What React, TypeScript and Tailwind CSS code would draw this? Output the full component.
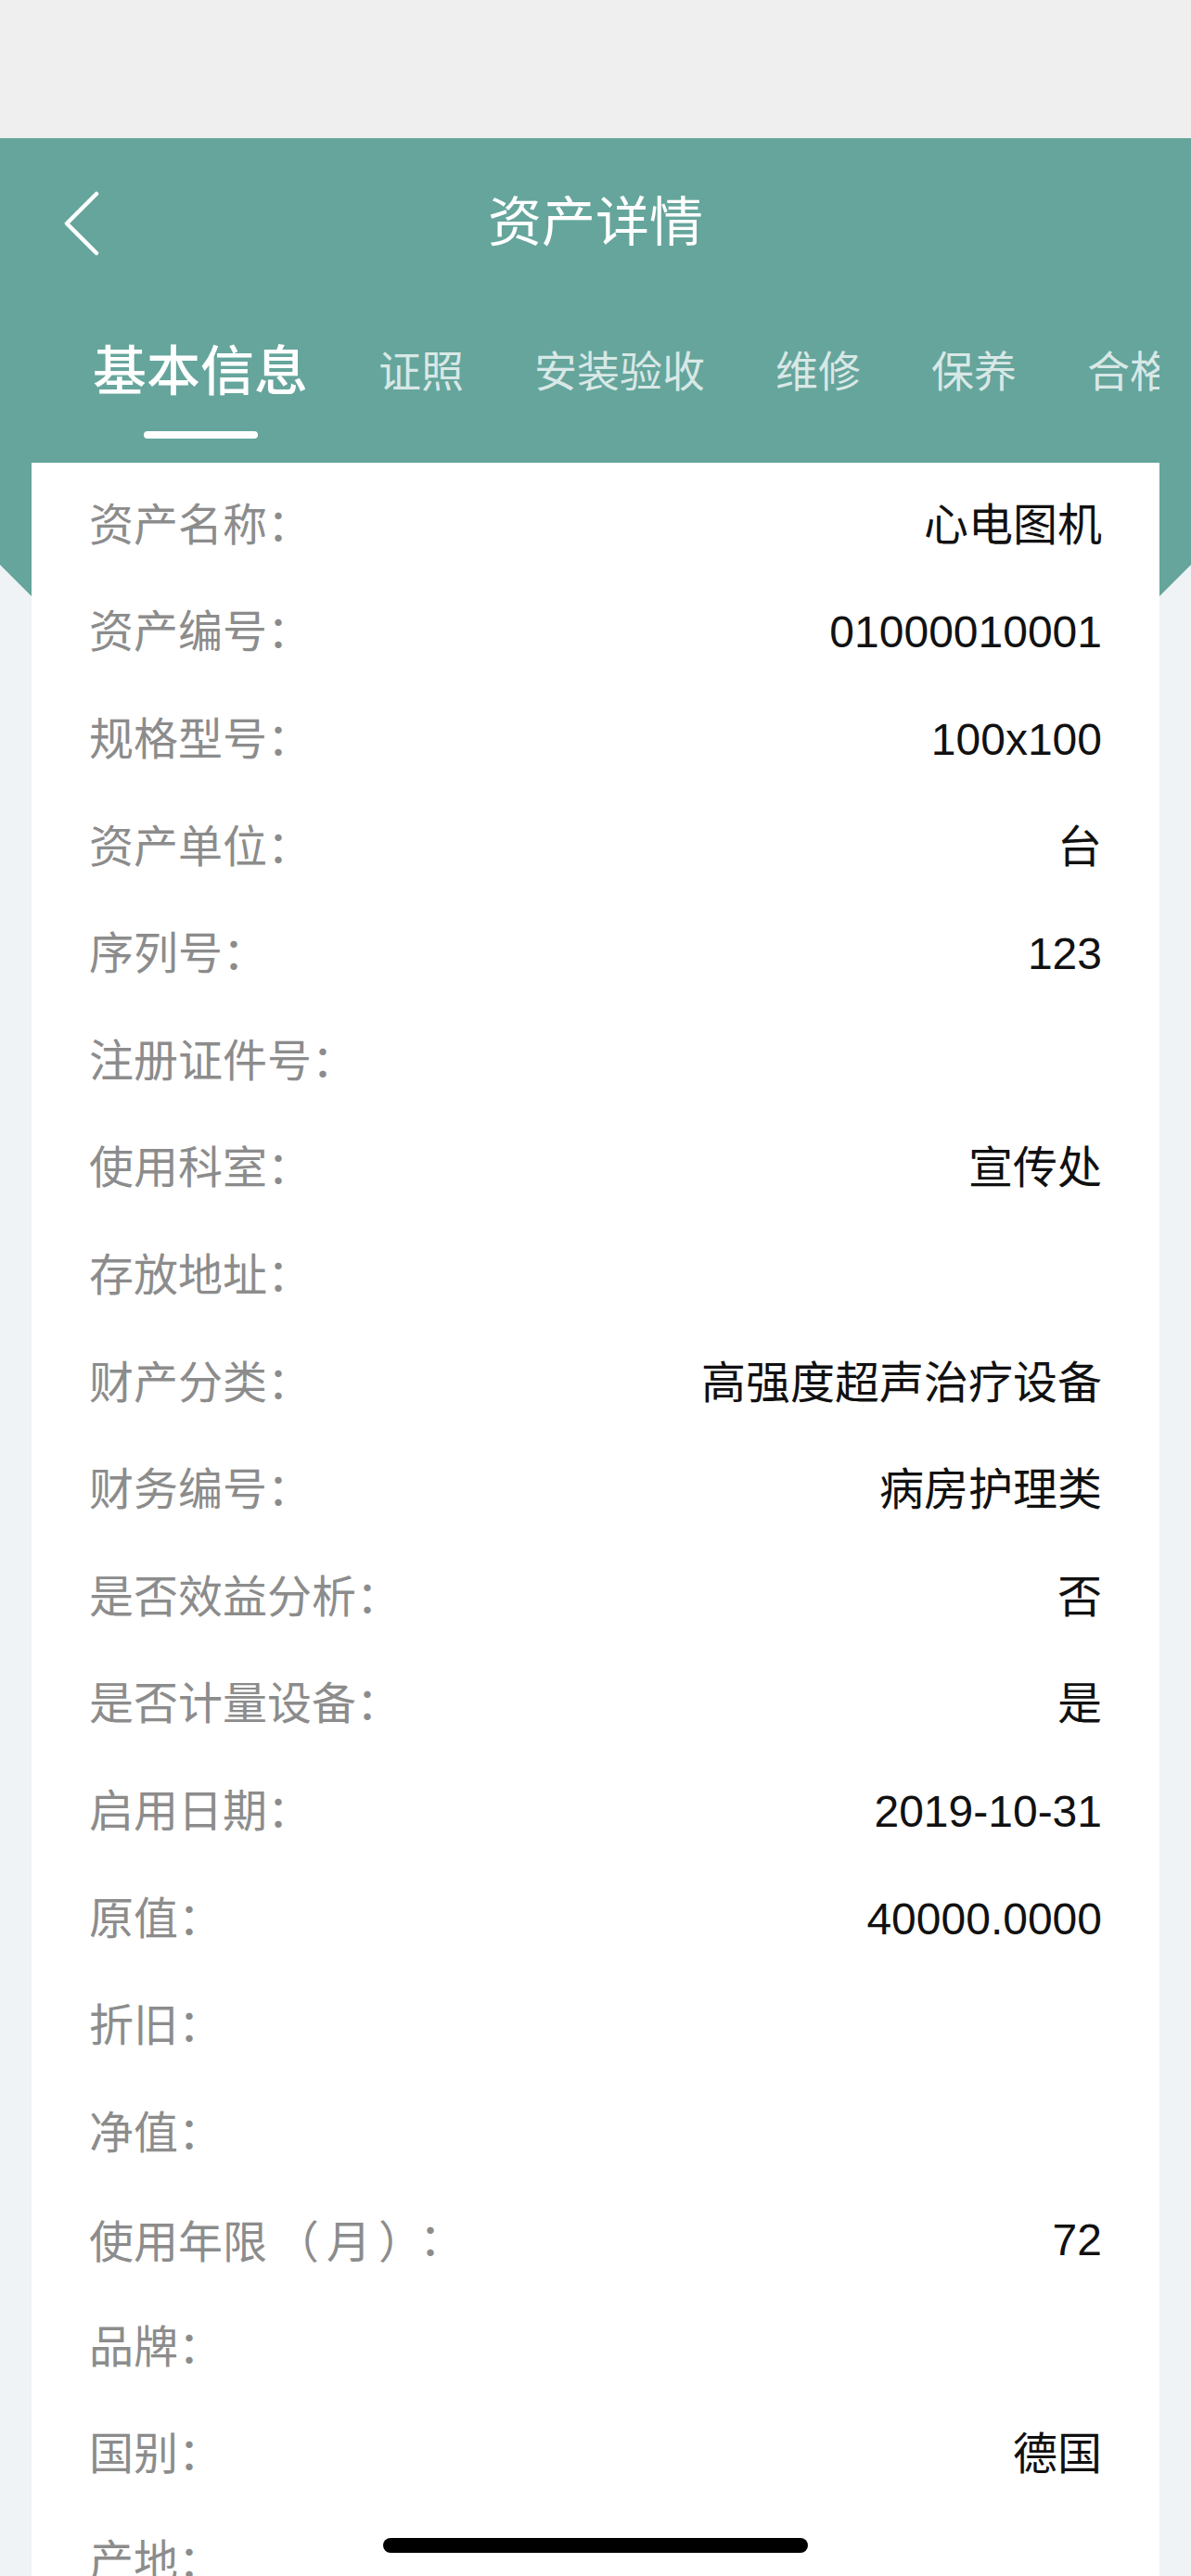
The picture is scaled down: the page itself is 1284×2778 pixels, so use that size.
import React from 'react';

type Row = { label: string; suffix?: string; value: string };

const ROWS: Row[] = [
  { label: '资产名称：', value: '心电图机' },
  { label: '资产编号：', value: '01000010001' },
  { label: '规格型号：', value: '100x100' },
  { label: '资产单位：', value: '台' },
  { label: '序列号：', value: '123' },
  { label: '注册证件号：', value: '' },
  { label: '使用科室：', value: '宣传处' },
  { label: '存放地址：', value: '' },
  { label: '财产分类：', value: '高强度超声治疗设备' },
  { label: '财务编号：', value: '病房护理类' },
  { label: '是否效益分析：', value: '否' },
  { label: '是否计量设备：', value: '是' },
  { label: '启用日期：', value: '2019-10-31' },
  { label: '原值：', value: '40000.0000' },
  { label: '折旧：', value: '' },
  { label: '净值：', value: '' },
  { label: '使用年限', suffix: '（月）：', value: '72' },
  { label: '品牌：', value: '' },
  { label: '国别：', value: '德国' },
  { label: '产地：', value: '' },
];

const TABS = ['证照', '安装验收', '维修', '保养', '合格证'];

function BackIcon() {
  return (
    <svg width="44" height="72" viewBox="0 0 44 72" fill="none">
      <path d="M36 4 L4 36 L36 68" stroke="#ffffff" strokeWidth="4.5" strokeLinecap="round" strokeLinejoin="round" />
    </svg>
  );
}

export default function App() {
  return (
    <div className="relative h-[2778px] overflow-hidden bg-[#eff3f6] font-['Liberation_Sans','Noto_Sans_CJK_SC',sans-serif]">
      <div className="h-[149px] bg-[#efefef]" />

      {/* teal header, its lower part slants away behind the card */}
      <div className="bg-[#65a59c] pb-[400px] [clip-path:polygon(0_0,100%_0,100%_460px,calc(100%-290px)_750px,290px_750px,0_460px)]">
        <div className="grid h-[182px] grid-cols-[1fr_auto_1fr] items-center">
          <div className="pl-[68px] pt-[2px]">
            <BackIcon />
          </div>
          <h1 className="text-[58px] leading-none font-normal text-white">资产详情</h1>
          <div />
        </div>

        <div className="mx-[34px] h-[168px] overflow-hidden whitespace-nowrap">
          <div className="flex items-start gap-[76px] pl-[66px] pt-[30px]">
            <div className="flex shrink-0 flex-col items-center">
              <span className="text-[58px] leading-[80px] font-medium text-white">基本信息</span>
              <span className="mt-[24px] h-[8px] w-[123px] rounded-full bg-white" />
            </div>
            {TABS.map((t) => (
              <span key={t} className="shrink-0 text-[46px] leading-[80px] text-white/75">
                {t}
              </span>
            ))}
          </div>
        </div>
      </div>

      <div className="relative mx-[34px] -mt-[400px] bg-white px-[62px] pt-[10px]">
        {ROWS.map((r) => (
          <div key={r.label} className="flex h-[115.6px] items-center justify-between text-[48px] leading-none">
            <span className="text-[#8c8c8c]">
              {r.label}
              {r.suffix ? (
                <span className="pl-[8px] tracking-[8px] font-['Noto_Sans_CJK_JP',sans-serif]">{r.suffix}</span>
              ) : null}
            </span>
            <span className="text-[#111111]">{r.value}</span>
          </div>
        ))}
      </div>

      <div className="absolute bottom-[25px] left-1/2 h-[16px] w-[458px] -translate-x-1/2 rounded-full bg-black" />
    </div>
  );
}
